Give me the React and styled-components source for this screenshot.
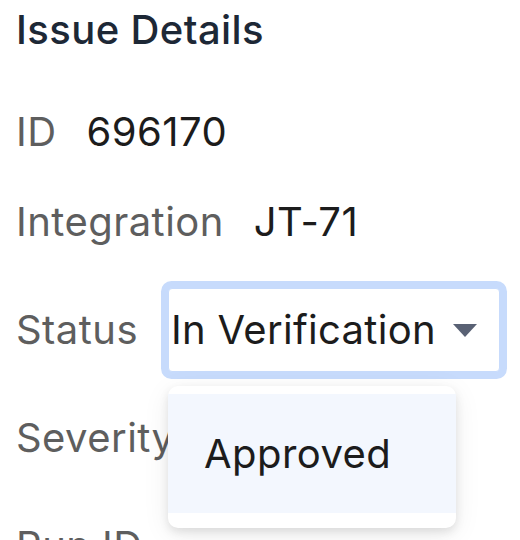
import React from 'react'
import styled, { createGlobalStyle } from 'styled-components'

const GlobalStyle = createGlobalStyle`
  body {
    margin: 0;
    background: #ffffff;
    font-family: Inter, "Noto Sans", sans-serif;
  }
`

const Panel = styled.div`
  padding: 6px 16px 0;
  height: 540px;
  box-sizing: border-box;
  overflow: hidden;
`

const Title = styled.h2`
  margin: 0;
  font-size: 40px;
  line-height: 48px;
  font-weight: 500;
  letter-spacing: 0.4px;
  color: #1d2836;
`

const FieldList = styled.div`
  margin-top: 54px;
  display: flex;
  flex-direction: column;
  gap: 24px;
`

const Row = styled.div`
  display: flex;
  align-items: center;
  gap: 30px;
  min-height: ${props => props.tall ? '84px' : '48px'};
  font-size: 40px;
  line-height: 48px;
  letter-spacing: 0.45px;
  white-space: nowrap;
`

const Label = styled.span`
  color: #5e5e5e;
`

const Value = styled.span`
  color: #1c1c1c;
`

const SelectWrap = styled.div`
  position: relative;
  flex: none;
`

const SelectButton = styled.button`
  display: flex;
  align-items: center;
  box-sizing: border-box;
  height: 84px;
  padding: 0 22px 0 2px;
  gap: 17px;
  background: #ffffff;
  border: 1px solid #c7dbfc;
  border-radius: 4px;
  box-shadow: 0 0 0 7px #c7dbfc;
  font-family: inherit;
  font-size: 40px;
  line-height: 48px;
  letter-spacing: 0.3px;
  white-space: nowrap;
  color: #1c1c1c;
  cursor: pointer;
`

const Caret = styled.svg`
  width: 24px;
  height: 13px;
  flex: none;
`

const Menu = styled.ul`
  position: absolute;
  top: 98px;
  left: 0;
  width: 288px;
  margin: 0;
  padding: 8px 0 15px;
  list-style: none;
  background: #ffffff;
  border-radius: 10px;
  box-shadow: 0 4px 10px rgba(0, 0, 0, 0.1), 0 6px 28px rgba(0, 0, 0, 0.07);
  z-index: 2;
`

const MenuItem = styled.li`
  display: flex;
  align-items: center;
  height: 119px;
  padding: 0 36px;
  background: ${props => props.active ? '#f3f7fe' : 'transparent'};
  color: #1c1c1c;
  font-size: 40px;
`

const App = () => {
  return (
    <Panel>
      <GlobalStyle />
      <Title>Issue Details</Title>
      <FieldList>
        <Row>
          <Label>ID</Label>
          <Value>696170</Value>
        </Row>
        <Row tall>
          <Label>Integration</Label>
          <Value>JT-71</Value>
        </Row>
        <Row tall>
          <Label>Status</Label>
          <SelectWrap>
            <SelectButton type="button">
              <span>In Verification</span>
              <Caret viewBox="0 0 24 13">
                <path d="M0 0 H24 L12 13 Z" fill="#596174" />
              </Caret>
            </SelectButton>
            <Menu>
              <MenuItem active>Approved</MenuItem>
            </Menu>
          </SelectWrap>
        </Row>
        <Row tall>
          <Label>Severity</Label>
        </Row>
        <Row tall>
          <Label>Run ID</Label>
        </Row>
      </FieldList>
    </Panel>
  )
}

export default App
